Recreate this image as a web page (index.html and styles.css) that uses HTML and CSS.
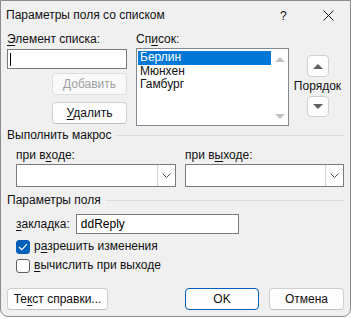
FILE: index.html
```html
<!DOCTYPE html>
<html lang="ru">
<head>
    <meta charset="UTF-8">
    <title>Параметры поля со списком</title>
    <link rel="stylesheet" href="styles.css">
</head>
<body>
    <div class="dialog">
        <!-- Title bar -->
        <div class="titlebar">
            <span class="title">Параметры поля со списком</span>
            <span class="help">?</span>
            <span class="close">
                <svg width="11" height="11" viewBox="0 0 11 11"><path d="M0.5 0.5 L10.5 10.5 M10.5 0.5 L0.5 10.5" stroke="#1a1a1a" stroke-width="1"/></svg>
            </span>
        </div>

        <div class="content">
            <!-- List items -->
            <div class="top">
                <div class="col-item">
                    <div class="lbl"><u>Э</u>лемент списка:</div>
                    <div class="textbox"><span class="caret"></span></div>
                    <button class="btn btn-add" disabled>Добавить</button>
                    <button class="btn btn-del"><u>У</u>далить</button>
                </div>
                <div class="col-list">
                    <div class="lbl">Сп<u>и</u>сок:</div>
                    <div class="listbox">
                        <ul class="items">
                            <li class="selected">Берлин</li>
                            <li>Мюнхен</li>
                            <li>Гамбург</li>
                        </ul>
                        <div class="scrollbar">
                            <span class="tri tri-up"></span>
                            <span class="tri tri-down"></span>
                        </div>
                    </div>
                </div>
                <div class="col-order">
                    <button class="arrow-btn"><span class="tri tri-up dark"></span></button>
                    <span class="order-lbl">Порядок</span>
                    <button class="arrow-btn arrow-down"><span class="tri tri-down dark"></span></button>
                </div>
            </div>

            <!-- Run macro -->
            <div class="group-title"><span>Выполнить макрос</span></div>
            <div class="macro-row">
                <div class="field">
                    <div class="lbl">при в<u>х</u>оде:</div>
                    <div class="combo combo-in">
                        <span class="combo-btn"><svg width="9" height="5" viewBox="0 0 9 5"><path d="M0.5 0.5 L4.5 4.5 L8.5 0.5" fill="none" stroke="#555" stroke-width="1"/></svg></span>
                    </div>
                </div>
                <div class="field">
                    <div class="lbl">при в<u>ы</u>ходе:</div>
                    <div class="combo combo-out">
                        <span class="combo-btn"><svg width="9" height="5" viewBox="0 0 9 5"><path d="M0.5 0.5 L4.5 4.5 L8.5 0.5" fill="none" stroke="#555" stroke-width="1"/></svg></span>
                    </div>
                </div>
            </div>

            <!-- Field params -->
            <div class="group-title"><span>Параметры поля</span></div>
            <div class="bookmark-row">
                <span class="lbl"><u>з</u>акладка:</span>
                <div class="textbox bookmark">ddReply</div>
            </div>
            <div class="check-row">
                <span class="checkbox checked">
                    <svg width="10" height="8" viewBox="0 0 10 8"><path d="M1 4 L3.8 6.6 L9 1.2" fill="none" stroke="#fff" stroke-width="1.2"/></svg>
                </span>
                <span>р<u>а</u>зрешить изменения</span>
            </div>
            <div class="check-row">
                <span class="checkbox"></span>
                <span><u>в</u>ычислить при выходе</span>
            </div>

            <div class="footer">
                <button class="btn btn-help">Те<u>к</u>ст справки...</button>
                <button class="btn btn-ok">OK</button>
                <button class="btn btn-cancel">Отмена</button>
            </div>
        </div>
    </div>
</body>
</html>
```

FILE: styles.css
```css
    body {
        margin: 0;
        background: #fff;
        font-family: 'Liberation Sans', sans-serif;
        font-size: 12px;
        color: #111;
    }

    u {
        text-decoration-thickness: 1px;
        text-underline-offset: 2px;
    }

    .dialog {
        width: 349px;
        height: 315px;
        border: 1px solid #8c8c8c;
        border-radius: 0 0 8px 8px;
        background: #f0f0f0;
        overflow: hidden;
    }

    .titlebar {
        display: flex;
        align-items: center;
        height: 29px;
        padding-left: 5px;
    }

    .title {
        flex: 1;
        line-height: 15px;
    }

    .help {
        width: 10px;
        margin-right: 33px;
    }

    .close {
        display: flex;
        margin-right: 16px;
    }

    .content {
        padding: 0 6px;
    }

    .lbl {
        line-height: 15px;
    }

    /* top section */
    .top {
        display: flex;
        padding-top: 2px;
    }

    .col-item {
        width: 120px;
        display: flex;
        flex-direction: column;
    }

    .textbox {
        box-sizing: border-box;
        height: 20px;
        background: #fff;
        border: 1px solid #7a7a7a;
        padding-left: 3px;
        line-height: 18px;
    }

    .col-item .textbox {
        margin-top: 2px;
    }

    .caret {
        display: inline-block;
        width: 1px;
        height: 13px;
        margin-top: 3px;
        margin-left: -1px;
        background: #000;
        vertical-align: top;
    }

    .btn {
        box-sizing: border-box;
        height: 22px;
        padding: 0;
        background: #fdfdfd;
        border: 1px solid #d0d0d0;
        border-bottom-color: #c0c0c0;
        border-radius: 4px;
        font-family: 'Liberation Sans', sans-serif;
        font-size: 12px;
        color: #111;
    }

    .btn-add,
    .btn-del {
        width: 75px;
        align-self: flex-end;
    }

    .btn-add {
        margin-top: 4px;
        color: #a0a0a0;
        background: #f9f9f9;
        border-color: #dcdcdc;
    }

    .btn-del {
        margin-top: 7px;
    }

    .col-list {
        width: 153px;
        margin-left: 9px;
    }

    .listbox {
        box-sizing: border-box;
        display: flex;
        height: 78px;
        margin-top: 1px;
        background: #fff;
        border: 1px solid #828790;
    }

    .items {
        flex: 1;
        list-style: none;
        margin: 0;
        padding: 2px 0 0 1px;
    }

    .items li {
        height: 13.5px;
        line-height: 13.5px;
        padding-left: 2px;
    }

    .items li.selected {
        background: #0078d7;
        color: #fff;
    }

    .scrollbar {
        width: 17px;
        display: flex;
        flex-direction: column;
        justify-content: space-between;
        align-items: center;
        padding: 8px 0 6px;
    }

    .tri {
        width: 0;
        height: 0;
        border-left: 5px solid transparent;
        border-right: 5px solid transparent;
    }

    .tri-up {
        border-bottom: 5px solid #c2c2c2;
    }

    .tri-down {
        border-top: 5px solid #c2c2c2;
    }

    .tri-up.dark {
        border-bottom-color: #5f5f5f;
    }

    .tri-down.dark {
        border-top-color: #5f5f5f;
    }

    .col-order {
        flex: 1;
        display: flex;
        flex-direction: column;
        align-items: center;
        padding-top: 23px;
        padding-left: 2px;
    }

    .arrow-btn {
        box-sizing: border-box;
        width: 22px;
        height: 22px;
        padding: 0;
        display: flex;
        justify-content: center;
        align-items: center;
        background: #fdfdfd;
        border: 1px solid #d0d0d0;
        border-radius: 4px;
    }

    .arrow-down {
        height: 21px;
    }

    .order-lbl {
        line-height: 15px;
        margin: 2px 0;
    }

    /* group headers */
    .group-title {
        display: flex;
        align-items: center;
        line-height: 15px;
        margin-top: 2px;
    }

    .group-title::after {
        content: "";
        flex: 1;
        height: 1px;
        background: #dcdcdc;
        margin: 0 0 0 5px;
    }

    .macro-row {
        display: flex;
        gap: 9px;
        padding-left: 9px;
        margin-top: 5px;
    }

    .field .lbl {
        margin-bottom: 1px;
    }

    .combo {
        box-sizing: border-box;
        display: flex;
        justify-content: flex-end;
        height: 23px;
        background: #fff;
        border: 1px solid #7a7a7a;
    }

    .combo-in {
        width: 160px;
    }

    .combo-out {
        width: 159px;
    }

    .combo-btn {
        width: 17px;
        display: flex;
        justify-content: center;
        align-items: center;
        border-left: 1px solid #cfcfcf;
    }

    .group-title + .bookmark-row {
        margin-top: 6px;
    }

    .macro-row + .group-title {
        margin-top: 6px;
    }

    .bookmark-row {
        display: flex;
        align-items: center;
        padding-left: 9px;
    }

    .bookmark {
        width: 163px;
        margin-left: 6px;
        padding-left: 4px;
        color: #000;
    }

    .check-row {
        display: flex;
        align-items: center;
        height: 19px;
        padding-left: 9px;
        line-height: 15px;
    }

    .bookmark-row + .check-row {
        margin-top: 3px;
    }

    .checkbox {
        box-sizing: border-box;
        width: 14px;
        height: 14px;
        margin-right: 4px;
        display: flex;
        justify-content: center;
        align-items: center;
        background: #fff;
        border: 1px solid #5f5f5f;
        border-radius: 3px;
    }

    .checkbox.checked {
        background: #005fb8;
        border-color: #005fb8;
    }

    .footer {
        display: flex;
        margin-top: 13px;
    }

    .btn-help {
        width: 101px;
    }

    .btn-ok {
        width: 74px;
        margin-left: 77px;
        border: 1px solid #005fb8;
    }

    .btn-cancel {
        width: 75px;
        margin-left: 10px;
    }
```
